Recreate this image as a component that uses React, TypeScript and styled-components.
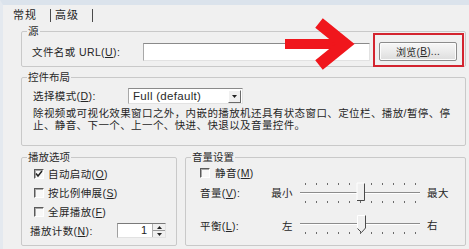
import React from 'react';
import styled, { createGlobalStyle } from 'styled-components';

const Global = createGlobalStyle`
  html, body { margin: 0; padding: 0; background: #f0f0f0; }
  body {
    width: 469px; height: 249px; overflow: hidden;
    font-family: "Liberation Sans", "Noto Sans CJK SC", sans-serif;
    font-size: 10.5px; color: #262626;
  }
  * { box-sizing: border-box; }
`;

const Window = styled.div`
  position: relative;
  width: 469px;
  height: 249px;
  background: #f0f0f0;
  border-top: 5px solid #dbe3ec;
  border-left: 3px solid #e4e9ef;
  display: flex;
  flex-direction: column;
`;

const TabStrip = styled.div`
  display: flex;
  padding: 4px 0 0 5px;
  height: 17px;
`;

const Tab = styled.div<{ $w: number; $pl: number }>`
  width: ${p => p.$w}px;
  height: 13px;
  line-height: 13px;
  padding-left: ${p => p.$pl}px;
  font-size: 11px;
  letter-spacing: 1px;
  color: #1e1e1e;
  border-right: 1px solid #4a4a4a;
`;

const Panel = styled.div`
  display: flex;
  flex-direction: column;
  padding: 3px 3px 0 18px;
`;

const Group = styled.fieldset<{ $mt?: number; $w?: number }>`
  margin: ${p => p.$mt ?? 0}px 0 0 0;
  padding: 0;
  min-width: 0;
  border: 1px solid #c9c9c9;
  border-radius: 2px;
  ${p => (p.$w ? `width: ${p.$w}px; flex: none;` : 'flex: 1;')}
`;

const Legend = styled.legend`
  margin-left: 5px;
  padding: 0 1px;
  line-height: 12px;
  font-size: 10.5px;
  color: #2a2a2a;
`;

const Acc = styled.span`
  text-decoration: underline;
`;

const SourceRow = styled.div`
  display: grid;
  grid-template-columns: 102px 227px 78px;
  column-gap: 9px;
  align-items: center;
  height: 19px;
  margin: 5px 0 5px 10px;
`;

const Label = styled.span<{ $ml?: number; $pt?: number; $right?: boolean }>`
  white-space: nowrap;
  line-height: 12px;
  letter-spacing: 0.4px;
  margin-left: ${p => p.$ml ?? 0}px;
  padding-top: ${p => p.$pt ?? 0}px;
  text-align: ${p => (p.$right ? 'right' : 'left')};
`;

const TextInput = styled.div`
  height: 18px;
  background: #fff;
  border-top: 1px solid #8a8a8a;
  border-left: 1px solid #a8a8a8;
  border-right: 1px solid #e2e2e2;
  border-bottom: 1px solid #e2e2e2;
`;

const Highlight = styled.div`
  position: relative;
  height: 19px;
  &::after {
    content: '';
    position: absolute;
    top: -9px;
    right: -7px;
    bottom: -6px;
    left: -6px;
    border: 2px solid #d3242f;
    pointer-events: none;
  }
`;

const Button = styled.div`
  height: 19px;
  border: 1px solid #8c8c8c;
  border-radius: 2px;
  background: linear-gradient(#f7f7f7, #ebebeb 50%, #dddddd);
  box-shadow: inset 0 0 0 1px #fcfcfc;
  display: flex;
  align-items: center;
  justify-content: center;
  font-size: 10px;
  letter-spacing: 0.3px;
  color: #2a2a2a;
`;

const LayoutBody = styled.div`
  padding: 5px 0 14px 11px;
`;

const SelectRow = styled.div`
  display: grid;
  grid-template-columns: 95px 115px;
  align-items: center;
  height: 16px;
`;

const Select = styled.div`
  height: 16px;
  display: flex;
  align-items: center;
  background: #fff;
  border-top: 1px solid #8a8a8a;
  border-left: 1px solid #a8a8a8;
  border-right: 1px solid #e2e2e2;
  border-bottom: 1px solid #e2e2e2;
`;

const SelectText = styled.span`
  flex: 1;
  padding-left: 4px;
  font-size: 11.5px;
  letter-spacing: 0.3px;
  color: #2a2a2a;
`;

const DropButton = styled.div`
  width: 13px;
  height: 13px;
  margin-right: 1px;
  background: #f0f0f0;
  border-top: 1px solid #fff;
  border-left: 1px solid #fff;
  border-right: 1px solid #6a6a6a;
  border-bottom: 1px solid #6a6a6a;
  display: flex;
  align-items: center;
  justify-content: center;
`;

const Description = styled.p`
  margin: 3px 0 0 0;
  line-height: 12px;
  letter-spacing: 0.4px;
  white-space: nowrap;
  color: #262626;
`;

const BottomRow = styled.div`
  display: flex;
  gap: 8px;
  margin-top: 5px;
`;

const OptionsBody = styled.div`
  display: flex;
  flex-direction: column;
  padding: 1px 0 5px 12px;
`;

const CheckRow = styled.div<{ $h: number }>`
  display: flex;
  align-items: center;
  gap: 4px;
  height: ${p => p.$h}px;
`;

const CheckBox = styled.span`
  width: 10px;
  height: 10px;
  flex: none;
  background: #f8f8f8;
  border-top: 1px solid #5a5a5a;
  border-left: 1px solid #5a5a5a;
  border-right: 1px solid #fff;
  border-bottom: 1px solid #fff;
  box-shadow: inset 1px 1px 0 #a8a8a8;
  display: flex;
  align-items: center;
  justify-content: center;
`;

const CountRow = styled.div`
  display: grid;
  grid-template-columns: 87px 49px;
  align-items: center;
  height: 19px;
  margin-left: -4px;
`;

const Spinner = styled.div`
  height: 15px;
  display: flex;
  background: #fff;
  border-top: 1px solid #7a7a7a;
  border-left: 1px solid #a0a0a0;
  border-right: 1px solid #e2e2e2;
  border-bottom: 1px solid #e2e2e2;
`;

const SpinValue = styled.span`
  flex: 1;
  text-align: right;
  padding-right: 5px;
  line-height: 13px;
  font-size: 11px;
  color: #222;
`;

const SpinButtons = styled.div`
  width: 13px;
  display: flex;
  flex-direction: column;
  border-left: 1px solid #b0b0b0;
`;

const SpinHalf = styled.div`
  flex: 1;
  display: flex;
  align-items: center;
  justify-content: center;
  background: #f0f0f0;
  border-bottom: 1px solid #9a9a9a;
  &:last-child { border-bottom: none; }
`;

const VolumeBody = styled.div`
  display: flex;
  flex-direction: column;
  padding: 1px 0 0 14px;
`;

const MuteRow = styled.div`
  display: flex;
  align-items: center;
  gap: 5px;
  height: 18px;
`;

const SliderRow = styled.div<{ $mt?: number }>`
  display: grid;
  grid-template-columns: 55px 33px 124px auto;
  column-gap: 5px;
  align-items: center;
  height: 22px;
  margin-top: ${p => p.$mt ?? 0}px;
`;

const Arrow = styled.svg`
  position: absolute;
  left: 282px;
  top: 14px;
  overflow: visible;
  pointer-events: none;
`;

const Tri = ({ up }: { up?: boolean }) => (
  <svg width="5" height="3" viewBox="0 0 5 3">
    <path d={up ? 'M0 3 L2.5 0 L5 3 Z' : 'M0 0 L5 0 L2.5 3 Z'} fill="#222" />
  </svg>
);

const Check = ({ checked }: { checked?: boolean }) => (
  <CheckBox>
    {checked && (
      <svg width="8" height="8" viewBox="0 0 8 8">
        <path d="M1 3.5 L3 6 L7 1" stroke="#222" strokeWidth="1.5" fill="none" />
      </svg>
    )}
  </CheckBox>
);

const TICKS = Array.from({ length: 11 }, (_, k) => 7 + 11 * k);

const Slider = ({ both }: { both?: boolean }) => {
  const line = both ? 10 : 11;
  return (
    <svg width="124" height="22" viewBox="0 0 124 22">
      <rect x="2" y={line} width="120" height="1" fill="#8c8c8c" />
      <rect x="2" y={line + 1} width="120" height="1" fill="#ffffff" />
      {TICKS.map(x => (
        <React.Fragment key={x}>
          {both && <rect x={x} y="1" width="1" height="2" fill="#6a6a6a" />}
          <rect x={x} y={both ? 19 : 20} width="1" height="2" fill="#6a6a6a" />
        </React.Fragment>
      ))}
      {both ? (
        <g>
          <rect x="59" y="1" width="8" height="18" fill="#efefef" />
          <path d="M59 19 V1 H67" stroke="#ffffff" fill="none" />
          <path d="M66.5 1.5 V18.5 H59" stroke="#4a4a4a" fill="none" />
        </g>
      ) : (
        <g>
          <path d="M59 3 H68 V16 L63.5 20.5 L59 16 Z" fill="#efefef" />
          <path d="M59.5 16 V3.5 H67.5" stroke="#ffffff" fill="none" />
          <path d="M67.5 3.5 V16 L63.5 20.5 L59.5 16.5" stroke="#4a4a4a" fill="none" />
        </g>
      )}
    </svg>
  );
};

export default function App() {
  return (
    <>
      <Global />
      <Window>
        <TabStrip>
          <Tab $w={43} $pl={5}>常规</Tab>
          <Tab $w={42} $pl={4}>高级</Tab>
        </TabStrip>
        <Panel>
          <Group>
            <Legend>源</Legend>
            <SourceRow>
              <Label>文件名或 URL(<Acc>U</Acc>):</Label>
              <TextInput />
              <Highlight>
                <Button>浏览(<Acc>B</Acc>)...</Button>
              </Highlight>
            </SourceRow>
          </Group>

          <Group $mt={4}>
            <Legend>控件布局</Legend>
            <LayoutBody>
              <SelectRow>
                <Label>选择模式(<Acc>D</Acc>):</Label>
                <Select>
                  <SelectText>Full (default)</SelectText>
                  <DropButton><Tri /></DropButton>
                </Select>
              </SelectRow>
              <Description>
                除视频或可视化效果窗口之外，内嵌的播放机还具有状态窗口、定位栏、播放/暂停、停
                <br />
                止、静音、下一个、上一个、快进、快退以及音量控件。
              </Description>
            </LayoutBody>
          </Group>

          <BottomRow>
            <Group $w={156}>
              <Legend>播放选项</Legend>
              <OptionsBody>
                <CheckRow $h={19}><Check checked /><Label>自动启动(<Acc>O</Acc>)</Label></CheckRow>
                <CheckRow $h={19}><Check /><Label>按比例伸展(<Acc>S</Acc>)</Label></CheckRow>
                <CheckRow $h={19}><Check /><Label>全屏播放(<Acc>F</Acc>)</Label></CheckRow>
                <CountRow>
                  <Label>播放计数(<Acc>N</Acc>):</Label>
                  <Spinner>
                    <SpinValue>1</SpinValue>
                    <SpinButtons>
                      <SpinHalf><Tri up /></SpinHalf>
                      <SpinHalf><Tri /></SpinHalf>
                    </SpinButtons>
                  </Spinner>
                </CountRow>
              </OptionsBody>
            </Group>

            <Group>
              <Legend>音量设置</Legend>
              <VolumeBody>
                <MuteRow><Check /><Label>静音(<Acc>M</Acc>)</Label></MuteRow>
                <SliderRow>
                  <Label>音量(<Acc>V</Acc>):</Label>
                  <Label $right>最小</Label>
                  <Slider both />
                  <Label>最大</Label>
                </SliderRow>
                <SliderRow $mt={8}>
                  <Label $pt={6}>平衡(<Acc>L</Acc>):</Label>
                  <Label $right $pt={6}>左</Label>
                  <Slider />
                  <Label $pt={4}>右</Label>
                </SliderRow>
              </VolumeBody>
            </Group>
          </BottomRow>
        </Panel>

        <Arrow width="72" height="52" viewBox="0 0 72 52">
          <line x1="0" y1="25" x2="56" y2="25" stroke="#f0161c" strokeWidth="10" />
          <polyline
            points="34,4 60,25 34,46"
            stroke="#f0161c"
            strokeWidth="12"
            fill="none"
            strokeLinejoin="miter"
            strokeMiterlimit="10"
          />
        </Arrow>
      </Window>
    </>
  );
}
